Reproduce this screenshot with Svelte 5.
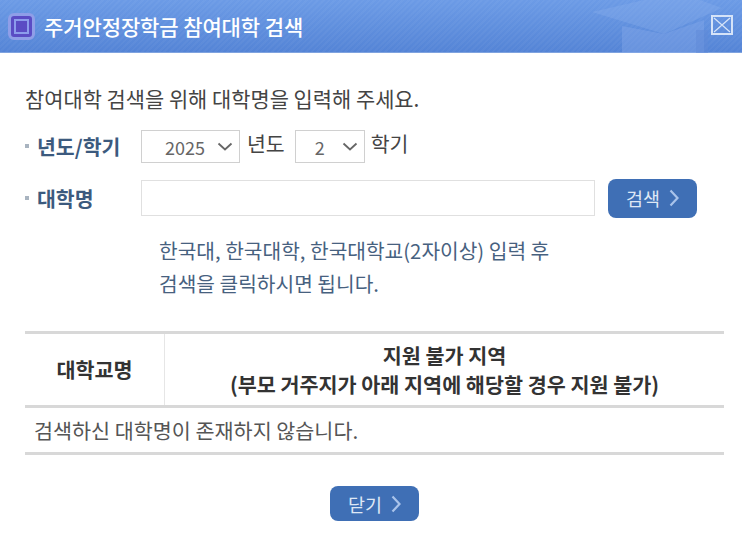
<script>
    let year = "2025";
    let term = "2";
    let name = "";
</script>

<div class="popup">
    <header class="head">
        <svg class="cap" viewBox="0 0 150 53" width="150" height="53" aria-hidden="true">
            <path d="M0 12 L52 0 L108 0 L130 8 L72 34 Z" fill="#8db2ee" opacity="0.3" />
            <path d="M30 26 L72 34 L112 20 L112 53 L30 53 Z" fill="#86abeb" opacity="0.4" />
            <rect x="104" y="30" width="12" height="23" fill="#5f8ad8" opacity="0.5" />
        </svg>
        <span class="mark"><i></i></span>
        <h1>주거안정장학금 참여대학 검색</h1>
        <button class="close" aria-label="닫기">
            <svg viewBox="0 0 22 20" width="22" height="20">
                <rect x="1" y="1" width="20" height="18" fill="none" stroke="#d5e3f8" stroke-width="2" />
                <path d="M3 3 L19 17 M19 3 L3 17" stroke="#d5e3f8" stroke-width="1.2" />
            </svg>
        </button>
    </header>

    <main class="body">
        <p class="intro">참여대학 검색을 위해 대학명을 입력해 주세요.</p>

        <div class="row term-row">
            <span class="label">년도/학기</span>
            <label class="select year">
                <select bind:value={year}><option>2025</option><option>2024</option></select>
                <svg viewBox="0 0 16 9" width="16" height="9"><path d="M1.5 1.5 L8 7.5 L14.5 1.5" /></svg>
            </label>
            <span class="unit">년도</span>
            <label class="select term">
                <select bind:value={term}><option>1</option><option>2</option></select>
                <svg viewBox="0 0 16 9" width="16" height="9"><path d="M1.5 1.5 L8 7.5 L14.5 1.5" /></svg>
            </label>
            <span class="unit last">학기</span>
        </div>

        <div class="row name-row">
            <span class="label">대학명</span>
            <input type="text" bind:value={name} />
            <button class="btn search">검색<svg viewBox="0 0 10 18" width="10" height="18"><path d="M1.5 1.5 L8.5 9 L1.5 16.5" /></svg></button>
        </div>

        <p class="hint">한국대, 한국대학, 한국대학교(2자이상) 입력 후<br />검색을 클릭하시면 됩니다.</p>

        <table>
            <thead>
                <tr>
                    <th class="uni">대학교명</th>
                    <th>지원 불가 지역<br />(부모 거주지가 아래 지역에 해당할 경우 지원 불가)</th>
                </tr>
            </thead>
            <tbody>
                <tr><td colspan="2">검색하신 대학명이 존재하지 않습니다.</td></tr>
            </tbody>
        </table>

        <div class="foot">
            <button class="btn closer">닫기<svg viewBox="0 0 10 18" width="10" height="18"><path d="M1.5 1.5 L8.5 9 L1.5 16.5" /></svg></button>
        </div>
    </main>
</div>

<style>
    :global(body) {
        background: #fff;
    }

    .popup {
        width: 742px;
        height: 535px;
        overflow: hidden;
        font-family: "Noto Sans CJK KR", "Noto Sans", sans-serif;
        color: #444;
    }

    .head {
        position: relative;
        display: flex;
        align-items: center;
        height: 53px;
        padding-left: 8px;
        box-sizing: border-box;
        background:
            repeating-linear-gradient(135deg, rgba(255, 255, 255, 0.035) 0 2px, transparent 2px 4px),
            linear-gradient(#6c9be6, #5484d6);
        border-bottom: 1px solid #7fa3df;
    }

    .cap {
        position: absolute;
        right: 0;
        top: 0;
    }

    .mark {
        display: flex;
        align-items: center;
        justify-content: center;
        width: 27px;
        height: 27px;
        box-sizing: border-box;
        border: 3px solid #8f9ee8;
        border-radius: 6px;
        background: #5a4cc4;
    }

    .mark i {
        width: 11px;
        height: 11px;
        border: 2px solid #8c9cec;
    }

    h1 {
        position: relative;
        margin: 0 0 0 9px;
        font-size: 21px;
        font-weight: 500;
        letter-spacing: -0.1px;
        color: #fff;
    }

    .close {
        position: absolute;
        top: 15px;
        right: 9px;
        padding: 0;
        width: 22px;
        height: 20px;
        border: 0;
        background: none;
        display: flex;
    }

    .body {
        padding: 0 18px 0 25px;
    }

    .intro {
        margin: 0;
        padding-top: 31px;
        font-size: 20.9px;
        line-height: 28px;
    }

    .row {
        display: flex;
        align-items: center;
    }

    .term-row {
        margin-top: 14px;
        height: 40px;
    }

    .name-row {
        margin-top: 12px;
        height: 40px;
    }

    .label {
        width: 116px;
        padding-left: 12px;
        box-sizing: border-box;
        position: relative;
        font-size: 20.5px;
        font-weight: 700;
        color: #3c5a7e;
    }

    .label::before {
        content: "";
        position: absolute;
        left: 0;
        top: 50%;
        margin-top: -2px;
        width: 4px;
        height: 4px;
        background: #a9b4c0;
    }

    .select {
        position: relative;
        display: block;
        box-sizing: border-box;
        height: 33px;
        border: 1px solid #d0d0d0;
        background: #fff;
    }

    .select svg {
        position: absolute;
        right: 6px;
        top: 11px;
        fill: none;
        stroke: #666;
        stroke-width: 1.8;
        pointer-events: none;
    }

    .select select {
        appearance: none;
        width: 100%;
        height: 100%;
        border: 0;
        background: none;
        font: inherit;
        font-size: 18px;
        color: #666;
        padding-top: 2px;
    }

    .year {
        width: 99px;
    }

    .year select {
        padding-left: 23px;
    }

    .term {
        width: 70px;
    }

    .term select {
        padding-left: 19px;
    }

    .unit {
        margin: -6px 10px 0 7px;
        font-size: 20.5px;
    }

    .unit.last {
        margin-left: 6px;
    }

    input {
        width: 454px;
        height: 36px;
        box-sizing: border-box;
        border: 1px solid #e0e0e0;
        background: #fff;
    }

    .btn {
        display: inline-flex;
        align-items: center;
        justify-content: center;
        gap: 9px;
        border: 0;
        border-radius: 8px;
        background: #3f6fb5;
        color: #dfe8f5;
        font: inherit;
        font-size: 18.5px;
    }

    .btn svg {
        fill: none;
        stroke: #a9c3ea;
        stroke-width: 2.2;
    }

    .search {
        width: 89px;
        height: 39px;
        margin-left: 13px;
    }

    .hint {
        margin: 16px 0 0 134px;
        font-size: 20.3px;
        line-height: 33px;
        color: #47617f;
    }

    table {
        width: 100%;
        margin-top: 31px;
        border-collapse: collapse;
        border-top: 3px solid #d8d8d8;
        border-bottom: 3px solid #d8d8d8;
    }

    th {
        height: 71px;
        padding: 0;
        font-size: 20.7px;
        line-height: 29px;
        font-weight: 700;
        color: #333;
        border-bottom: 3px solid #d8d8d8;
    }

    .uni {
        width: 139px;
        border-right: 1px solid #e6e6e6;
    }

    td {
        height: 44px;
        padding: 0 0 0 9px;
        font-size: 20.7px;
        color: #555;
    }

    .foot {
        display: flex;
        justify-content: center;
        margin-top: 31px;
    }

    .closer {
        width: 89px;
        height: 35px;
    }
</style>
